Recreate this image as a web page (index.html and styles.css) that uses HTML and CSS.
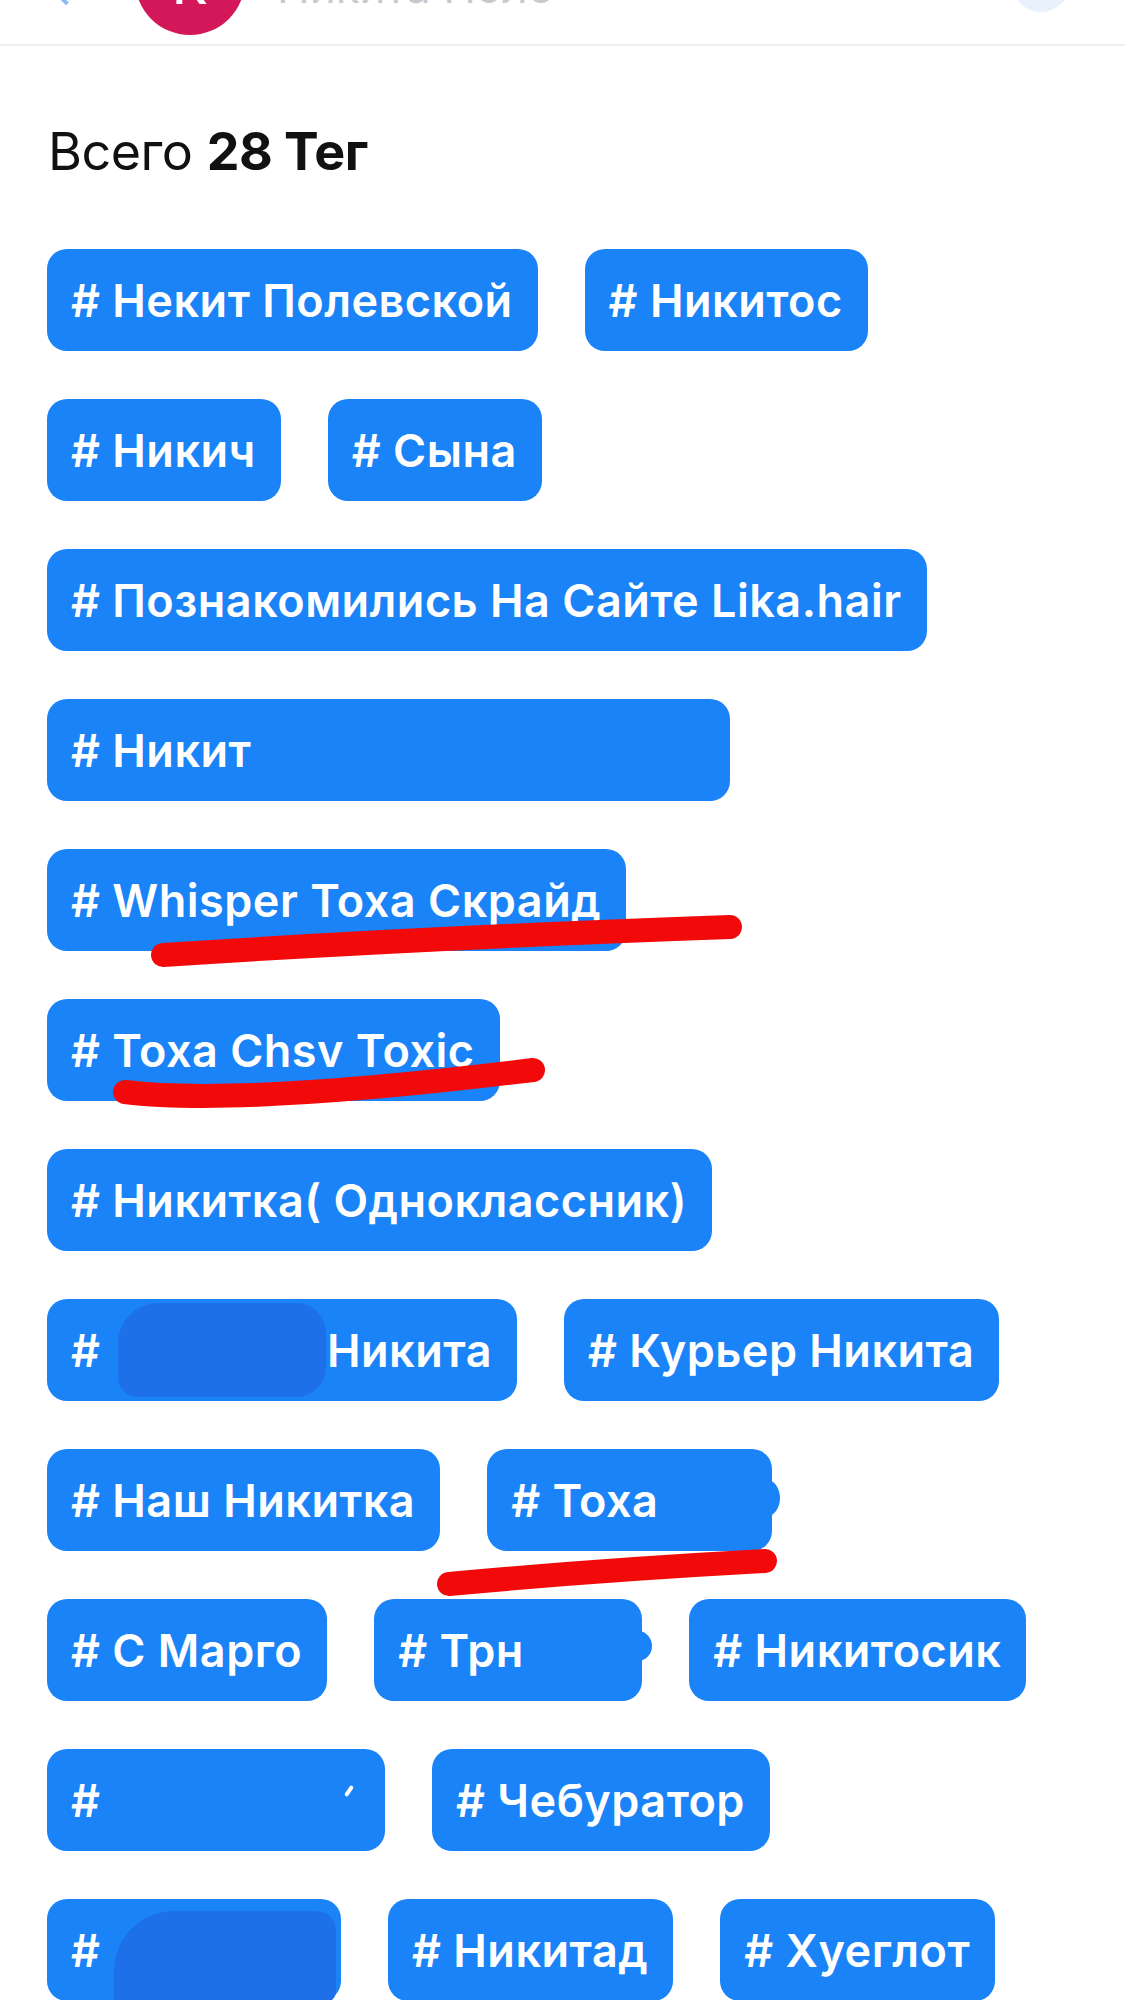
FILE: index.html
```html
<!DOCTYPE html>
<html lang="ru">
<head>
<meta charset="utf-8">
<title>Теги</title>
<link rel="stylesheet" href="styles.css">
</head>
<body>
<div class="page">
  <header class="topbar">
    <span class="back"></span>
    <div class="avatar"><span class="avatar-letter">К</span></div>
    <span class="name">Никита Поле</span>
    <span class="action"></span>
  </header>

  <h1 class="title">Всего <b>28 Тег</b></h1>

  <section class="tags">
    <div class="tag-row">
      <span class="tag"># Некит Полевской</span>
      <span class="tag"># Никитос</span>
    </div>
    <div class="tag-row">
      <span class="tag"># Никич</span>
      <span class="tag"># Сына</span>
    </div>
    <div class="tag-row">
      <span class="tag"># Познакомились На Сайте Lika.hair</span>
    </div>
    <div class="tag-row">
      <span class="tag tag-hidden-a"># Никит</span>
    </div>
    <div class="tag-row">
      <span class="tag"># Whisper Тоха Скрайд</span>
    </div>
    <div class="tag-row">
      <span class="tag"># Тоха Chsv Toxic</span>
    </div>
    <div class="tag-row">
      <span class="tag"># Никитка( Одноклассник)</span>
    </div>
    <div class="tag-row">
      <span class="tag tag-hidden-b">#<span class="patch patch-b"></span><span class="tail">Никита</span></span>
      <span class="tag"># Курьер Никита</span>
    </div>
    <div class="tag-row">
      <span class="tag"># Наш Никитка</span>
      <span class="tag tag-hidden-c"># Тоха<span class="blob blob-c"></span></span>
    </div>
    <div class="tag-row">
      <span class="tag"># С Марго</span>
      <span class="tag tag-hidden-d"># Трн<span class="blob blob-d"></span></span>
      <span class="tag"># Никитосик</span>
    </div>
    <div class="tag-row">
      <span class="tag tag-hidden-e">#<span class="tick"></span></span>
      <span class="tag"># Чебуратор</span>
    </div>
    <div class="tag-row">
      <span class="tag tag-hidden-f">#<span class="patch patch-f"></span></span>
      <span class="tag"># Никитад</span>
      <span class="tag"># Хуеглот</span>
    </div>
  </section>

  <svg class="marks" width="1125" height="2000" viewBox="0 0 1125 2000" aria-hidden="true">
    <path d="M 163 955 Q 420 938 730 927" />
    <path d="M 125 1092 Q 240 1106 533 1070" />
    <path d="M 449 1584 Q 600 1570 765 1561" />
  </svg>
</div>
</body>
</html>
```

FILE: styles.css
```css
* { box-sizing: border-box; }

html, body {
  margin: 0;
  padding: 0;
  background: #ffffff;
}

body {
  font-family: Inter, Roboto, "Noto Sans", "Liberation Sans", sans-serif;
  color: #111111;
}

.page {
  position: relative;
  width: 1125px;
  height: 2000px;
  overflow: hidden;
}

/* ---------- top bar (cut off) ---------- */
.topbar {
  position: relative;
  height: 46px;
  border-bottom: 2px solid #eeeeee;
  overflow: hidden;
  display: flex;
  align-items: flex-end;
}

.back {
  position: absolute;
  left: 58px;
  top: -14px;
  width: 16px;
  height: 16px;
  border-left: 4px solid #2a86f0;
  border-bottom: 4px solid #2a86f0;
  transform: rotate(45deg);
  opacity: 0.55;
}

.avatar {
  position: absolute;
  left: 135px;
  top: -75px;
  width: 110px;
  height: 110px;
  border-radius: 50%;
  background: #d3185a;
  display: flex;
  align-items: center;
  justify-content: center;
}

.avatar-letter {
  color: #ffffff;
  font-size: 52px;
  font-weight: 500;
  margin-top: 10px;
}

.name {
  position: absolute;
  left: 277px;
  top: -40px;
  font-size: 44px;
  color: #9aa0a6;
  opacity: 0.55;
}

.action {
  position: absolute;
  left: 1012px;
  top: -46px;
  width: 58px;
  height: 58px;
  border-radius: 50%;
  background: #e8f1fc;
}

/* ---------- title ---------- */
.title {
  margin: 74px 0 0 48px;
  font-size: 52px;
  line-height: 64px;
  font-weight: 400;
  letter-spacing: -0.5px;
  color: #111111;
}

.title b {
  font-weight: 700;
}

/* ---------- tags ---------- */
.tags {
  margin-top: 65px;
  padding-left: 47px;
  display: flex;
  flex-direction: column;
  gap: 48px;
}

.tag-row {
  display: flex;
  gap: 47px;
}

.tag {
  position: relative;
  display: inline-flex;
  align-items: center;
  height: 102px;
  padding: 0 25px 0 24px;
  border-radius: 20px;
  background: #1a83f7;
  color: #ffffff;
  font-size: 45px;
  font-weight: 600;
  letter-spacing: 0.5px;
  white-space: pre;
  flex: none;
}

/* tags whose text was blanked out */
.tag-hidden-a { width: 683px; }
.tag-hidden-b { width: 470px; }
.tag-hidden-c { width: 285px; }
.tag-hidden-d { width: 268px; }
.tag-hidden-e { width: 338px; }
.tag-hidden-f { width: 294px; }

.patch {
  flex: none;
  display: inline-block;
  background: #1e70e8;
}

.patch-b {
  width: 208px;
  height: 94px;
  margin-left: 18px;
  border-radius: 40px 30px 30px 20px;
}

.patch-f {
  width: 222px;
  height: 92px;
  margin-left: 14px;
  margin-top: 14px;
  border-radius: 60px 20px 12px 0;
}

.tail {
  margin-left: auto;
}

.blob {
  position: absolute;
  border-radius: 50%;
  background: #1a83f7;
}

.blob-c {
  right: -8px;
  top: 30px;
  width: 30px;
  height: 38px;
}

.blob-d {
  right: -10px;
  top: 32px;
  width: 28px;
  height: 30px;
}

.tick {
  position: absolute;
  right: 34px;
  top: 36px;
  width: 4px;
  height: 12px;
  background: #ffffff;
  border-radius: 2px;
  transform: rotate(35deg);
}

/* ---------- red hand-drawn marks ---------- */
.marks {
  position: absolute;
  left: 0;
  top: 0;
  pointer-events: none;
}

.marks path {
  fill: none;
  stroke: #f20a0a;
  stroke-width: 24;
  stroke-linecap: round;
}
```
